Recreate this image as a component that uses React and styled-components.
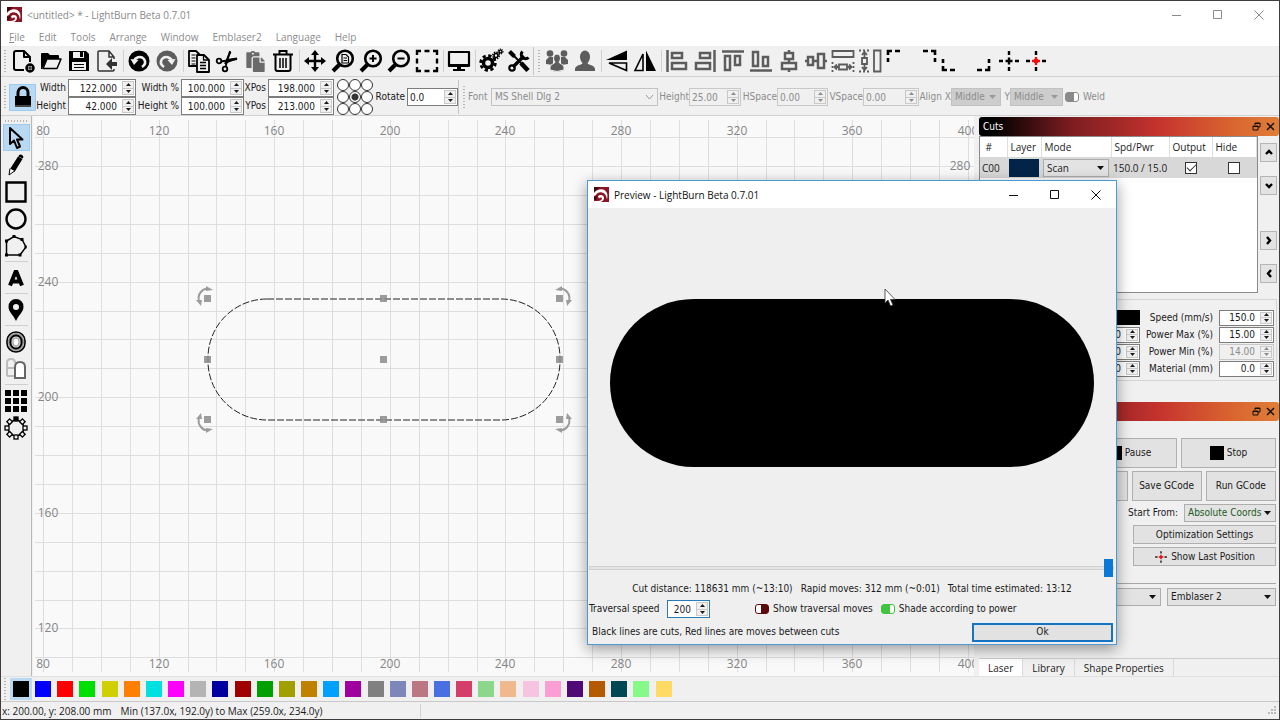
import React from "react";
import styled, { createGlobalStyle, css } from "styled-components";
import { FaPaste } from "react-icons/fa";

const tahoma = `"DejaVu Sans Condensed", "DejaVu Sans", sans-serif`;
const segoe = `"Open Sans", "Noto Sans", sans-serif`;

const GlobalStyle = createGlobalStyle`
  * { box-sizing: border-box; }
  body { margin: 0; background: #f0f0f0; overflow: hidden; }
  button, input, select { font: inherit; color: inherit; margin: 0; padding: 0; border: 0; background: none; border-radius: 0; outline: 0; }
`;

const Window = styled.div`
  display: flex;
  flex-direction: column;
  height: 100vh;
  border: 1px solid #403c3e;
  background: #f0f0f0;
  color: #1a1a1a;
  font: 10px/14px ${tahoma};
  position: relative;
  overflow: hidden;
`;

const TitleBar = styled.header`
  display: flex;
  align-items: center;
  flex: none;
  height: 27px;
  padding-left: 6px;
  background: #fff;
  font-family: ${segoe};
  color: ${(p) => (p.$active ? "#111" : "#8a8a8a")};
`;

const Title = styled.h1`
  flex: 1;
  margin: 0 0 0 5px;
  font-size: 10px;
  font-weight: 400;
`;

const WinButton = styled.button`
  width: 41px;
  height: 26px;
  display: flex;
  align-items: center;
  justify-content: center;
`;

const MenuBar = styled.nav`
  display: flex;
  flex: none;
  height: 18px;
  padding-left: 1px;
  background: #fff;
  font-family: ${segoe};
  color: #8c8c8c;
`;

const MenuItem = styled.button`
  padding: 0 7px;
`;

const ToolBar = styled.div`
  display: flex;
  align-items: center;
  flex: none;
  height: ${(p) => p.$h}px;
  padding-top: ${(p) => p.$pt || 0}px;
  border-bottom: 1px solid #d2d2d2;
`;

const Grip = styled.span`
  align-self: center;
  flex: none;
  width: 2px;
  height: 22px;
  margin: 0 3px;
  background: repeating-linear-gradient(#b4b4b4 0 1px, transparent 1px 3px);
`;

const RailGrip = styled.span`
  flex: none;
  width: 23px;
  height: 2px;
  margin: 4px 0 2px;
  background: repeating-linear-gradient(90deg, #b4b4b4 0 1px, transparent 1px 3px);
`;

const Split = styled.span`
  flex: none;
  width: 1px;
  height: 22px;
  margin: 0 1px 0 2px;
  background: #d0d0d0;
`;

const Edge = styled.span`
  flex: none;
  align-self: stretch;
  width: 1px;
  margin: 1px 1px 1px 0;
  background: #c4c4c4;
`;

const IconButton = styled.button`
  flex: none;
  display: flex;
  align-items: center;
  justify-content: center;
  width: ${(p) => p.$w || 28}px;
  height: 27px;
`;

const Glyph = styled.svg`
  display: block;
  flex: none;
  width: 24px;
  height: 24px;
  overflow: visible;
  color: ${(p) => p.$tone || "#000"};
`;

const LockButton = styled.button`
  flex: none;
  width: 27px;
  height: 27px;
  background: #b9d9f3;
  border: 1px solid #9ccbf0;
  display: flex;
  align-items: center;
  justify-content: center;
`;

const FieldGrid = styled.div`
  display: grid;
  flex: none;
  grid-template-columns: ${(p) => p.$label}px ${(p) => p.$field}px;
  column-gap: 2px;
  align-items: center;
`;

const Label = styled.label`
  text-align: ${(p) => (p.$left ? "left" : "right")};
  white-space: nowrap;
  flex: none;
  width: ${(p) => (p.$w ? p.$w + "px" : "auto")};
  color: ${(p) => (p.$off ? "#8c8c8c" : "inherit")};
`;

const SpinFrame = styled.span`
  display: flex;
  align-items: center;
  flex: none;
  width: ${(p) => (p.$w ? p.$w + "px" : "100%")};
  height: ${(p) => p.$h || 18}px;
  padding: 1px;
  border: 1px solid ${(p) => (p.$focus ? "#2a7ab8" : p.$off ? "#c8c8c8" : "#7c7c7c")};
  background: ${(p) => (p.$off ? "#f0f0f0" : "#fff")};
  color: ${(p) => (p.$off ? "#8c8c8c" : "#1a1a1a")};

  input {
    flex: 1;
    min-width: 0;
    height: 100%;
    padding: 0 5px 0 1px;
    text-align: ${(p) => (p.$left ? "left" : "right")};
  }
`;

const Steps = styled.span`
  display: flex;
  flex-direction: column;
  width: 12px;
  height: 100%;

  button {
    flex: 1;
    display: flex;
    align-items: center;
    justify-content: center;
    background: #f0f0f0;
    border: 1px solid #c9c9c9;
  }
  button + button { border-top: 0; }
  svg { display: block; width: 5px; height: 3px; }
`;

const SelectFrame = styled.span`
  position: relative;
  display: flex;
  flex: ${(p) => (p.$w ? "none" : "1")};
  width: ${(p) => (p.$w ? p.$w + "px" : "auto")};
  height: 18px;
  border: 1px solid ${(p) => (p.$off ? "#c2c2c2" : "#adadad")};
  background: ${(p) => p.$bg || "#e3e3e3"};
  color: ${(p) => p.$tone || "inherit"};

  select {
    appearance: none;
    flex: 1;
    min-width: 0;
    padding-left: 3px;
    opacity: 1;
  }
  svg {
    position: absolute;
    right: 4px;
    top: 6px;
    width: 7px;
    height: 4px;
    pointer-events: none;
    overflow: visible;
  }
`;

const Anchors = styled.fieldset`
  display: grid;
  grid-template-columns: repeat(3, 12px);
  flex: none;
  margin: 0 1px 0 3px;
  padding: 0;
  border: 0;

  input {
    appearance: none;
    width: 12px;
    height: 12px;
    border: 1px solid #333;
    border-radius: 50%;
    background: #fff;
  }
  input:checked {
    background: radial-gradient(circle, #333 0 3px, #fff 4px);
  }
`;

const Toggle = styled.input.attrs({ type: "checkbox" })`
  appearance: none;
  flex: none;
  width: 14px;
  height: 10px;
  border: 1px solid ${(p) => p.$c};
  border-radius: 3px;
  background: linear-gradient(90deg, ${(p) => (p.$right ? `#fff 0 5px, ${p.$c} 5px` : `${p.$c} 0 8px, #fff 8px`)});
`;

const WeldOption = styled.div`
  display: flex;
  align-items: center;
  gap: 4px;
  margin-left: 2px;
`;

const Body = styled.main`
  display: flex;
  flex: 1;
  min-height: 0;
`;

const Rail = styled.div`
  display: flex;
  flex-direction: column;
  align-items: center;
  flex: none;
  width: 31px;
  border-right: 1px solid #b8b8b8;
`;

const RailButton = styled.button`
  flex: none;
  display: flex;
  align-items: center;
  justify-content: center;
  width: 27px;
  height: 27px;
  ${(p) =>
    p.$on &&
    css`
      background: #b9d9f3;
      border: 1px solid #9ccbf0;
    `}
`;

const RailSplit = styled.span`
  flex: none;
  width: 23px;
  height: 1px;
  margin: 2px 0;
  background: #cfcfcf;
`;

const Canvas = styled.svg`
  flex: 1;
  min-width: 0;
  height: 100%;
  margin-left: 1px;
  background: #f9f9f9;
  font: 12px ${segoe};
`;

const Dock = styled.aside`
  display: flex;
  flex-direction: column;
  flex: none;
  width: 300px;
  margin-left: 5px;
  padding-top: 1px;
`;

const DockHeader = styled.h2`
  display: flex;
  align-items: center;
  flex: none;
  height: 19px;
  margin: ${(p) => (p.$spaced ? "21px 0 0" : "0")};
  padding: 0 3px 0 4px;
  gap: 3px;
  border-radius: 3px;
  background: linear-gradient(90deg, #000 5%, #7a1c20 30%, #c5332e 60%, #d8602e 82%, #e07e38);
  color: #fff;
  font-size: 10px;
  font-weight: 400;

  span { flex: 1; }
  button { width: 11px; height: 12px; }
`;

const CutsArea = styled.div`
  display: flex;
  flex: none;
  height: 157px;
`;

const CutsList = styled.div`
  flex: 1;
  background: #fff;
  border: 1px solid #8a8a8a;
`;

const CutsTable = styled.table`
  width: 100%;
  table-layout: fixed;
  border-collapse: collapse;
  font: 10px/14px ${segoe};

  th {
    height: 20px;
    padding: 0 3px;
    font-weight: 400;
    text-align: left;
    border-right: 1px solid #dedede;
    white-space: nowrap;
  }
  td {
    height: 21px;
    padding: 0 2px;
    background: #d8d8d8;
    white-space: nowrap;
  }
`;

const LayerChip = styled.span`
  display: block;
  height: 18px;
  background: #022446;
`;

const Tick = styled.input.attrs({ type: "checkbox" })`
  appearance: none;
  display: block;
  width: 12px;
  height: 12px;
  margin: 0 auto !important;
  background: #fff !important;
  border: 1px solid #333 !important;

  &:checked::after {
    content: "";
    display: block;
    width: 8px;
    height: 4px;
    margin: 1px;
    border: solid #333;
    border-width: 0 0 1px 1px;
    transform: rotate(-45deg);
  }
`;

const OrderColumn = styled.div`
  display: flex;
  flex-direction: column;
  justify-content: space-between;
  width: 21px;
  padding: 7px 2px 10px 2px;
  gap: 14px;

  button {
    width: 17px;
    height: 19px;
    display: flex;
    align-items: center;
    justify-content: center;
    background: #e3e3e3;
    border: 1px solid #b5b5b5;
  }
  button:nth-child(3) { margin-top: 22px; }
`;

const LayerForm = styled.div`
  display: grid;
  flex: none;
  grid-template-columns: 95px 60px 1fr 55px;
  grid-auto-rows: 17px;
  column-gap: 6px;
  align-items: center;
  margin-top: 6px;
  padding: 9px 6px 3px 0;
  margin-right: 2px;
  border: solid #d4d4d4;
  border-width: 1px 1px 1px 0;
`;

const BlackBar = styled.span`
  height: 15px;
  background: #000;
`;

const LaserPanel = styled.div`
  display: flex;
  flex-direction: column;
  flex: 1;
  padding: 17px 3px 0 4px;
`;

const Row = styled.div`
  display: flex;
  align-items: center;
  flex: none;
  gap: ${(p) => p.$gap || 4}px;
  margin-bottom: 3px;
  justify-content: ${(p) => (p.$end ? "flex-end" : "flex-start")};
`;

const PushButton = styled.button`
  display: flex;
  align-items: center;
  justify-content: center;
  gap: 3px;
  flex: ${(p) => (p.$w ? "none" : "1")};
  width: ${(p) => (p.$w ? p.$w + "px" : "auto")};
  min-width: 0;
  height: ${(p) => p.$h || 30}px;
  background: #e2e2e2;
  border: 1px solid #b0b0b0;
  white-space: nowrap;
  ${(p) =>
    p.$primary &&
    css`
      border: 2px solid #1673c4;
    `}
`;

const Square = styled.span`
  width: 14px;
  height: 14px;
  background: #000;
`;

const Rule = styled.hr`
  width: 100%;
  margin: 14px 0 4px;
  border: 0;
  border-top: 1px solid #a8a8a8;
`;

const Tabs = styled.div`
  display: flex;
  flex: none;
  height: 18px;
  border-top: 1px solid #cccccc;
  font-family: ${segoe};
`;

const Tab = styled.button`
  padding: 0 9px;
  border-right: 1px solid #dadada;
  background: ${(p) => (p.$on ? "#fff" : "transparent")};
`;

const Palette = styled.div`
  display: flex;
  align-items: center;
  flex: none;
  height: 26px;
  border-top: 1px solid #e0e0e0;
  border-bottom: 1px solid #c8c8c8;
`;

const Swatches = styled.div`
  display: flex;
  justify-content: space-between;
  width: 52%;
  margin-left: 1px;
`;

const Swatch = styled.button`
  width: 22px;
  height: 22px;
  padding: 3px;
  background: ${(p) => (p.$on ? "#b9d9f3" : "transparent")};

  span {
    display: block;
    width: 16px;
    height: 16px;
    background: ${(p) => p.$c};
  }
`;

const StatusBar = styled.footer`
  display: flex;
  align-items: center;
  flex: none;
  height: 17px;
  padding: 0 2px 0 1px;
  gap: 9px;
  font-family: ${segoe};

  span:nth-child(2) { flex: 0 0 301px; border-right: 1px solid #d4d4d4; }
  svg { margin-left: auto; }
`;

const Dialog = styled.section`
  position: absolute;
  left: 586px;
  top: 179px;
  width: 530px;
  height: 465px;
  display: flex;
  flex-direction: column;
  background: #efefef;
  border: 1px solid #4d9bd2;
  box-shadow: 0 4px 14px rgba(0, 0, 0, 0.4);
`;

const PreviewArea = styled.div`
  flex: 1;
  display: flex;
  align-items: center;
  justify-content: center;
`;

const Slider = styled.input.attrs({ type: "range" })`
  appearance: none;
  flex: none;
  height: 20px;
  margin: 0 2px 0 1px !important;

  &::-webkit-slider-runnable-track {
    height: 4px;
    background: #e4e4e4;
    border: 1px solid #d2d2d2;
  }
  &::-webkit-slider-thumb {
    appearance: none;
    width: 9px;
    height: 18px;
    margin-top: -8px;
    background: #0a78d6;
  }
`;

const Stats = styled.p`
  flex: none;
  display: flex;
  justify-content: center;
  gap: 8px;
  height: 20px;
  margin: 0;
  line-height: 22px;
  white-space: pre;
`;

const DialogRow = styled.div`
  display: flex;
  align-items: center;
  flex: none;
  gap: 5px;
  height: ${(p) => p.$h}px;
  padding: 0 3px 0 ${(p) => p.$pl}px;
`;

const TraversalOptions = styled.div`
  display: flex;
  align-items: center;
  gap: 4px;
  margin-left: 40px;

  label { margin-right: 4px; }
`;

const Note = styled.span`
  flex: 1;
`;

const Pointer = styled.svg`
  position: absolute;
  left: 296px;
  top: 107px;
  width: 12px;
  height: 19px;
`;

function Logo() {
  return (
    <svg width="15" height="15" viewBox="0 0 15 15" aria-hidden="true">
      <rect width="15" height="15" fill="#8d1425" />
      <path d="M0 0h6L0 5z" fill="#3c0a12" />
      <path d="M0 6C3 2 8 1.500 11 3.500c2.500 2 3 5 2 9-.5-4-2-6.500-5-7C5 5 3 6 2 8L0 9z" fill="#fff" />
      <path d="M4 9.500C6 7 10 8 10 11c0 2-2 4-4 4H0v-1h4c2 0 4-1 4-2.500C8 10 6 10 5 11.500z" fill="#fff" />
      <path d="M0 10l3-1-1 4H0z" fill="#3c0a12" />
    </svg>
  );
}

function WindowButtons() {
  return (
    <>
      <WinButton aria-label="Minimize">
        <svg width="10" height="10"><path d="M0 5.500h9" stroke="currentColor" /></svg>
      </WinButton>
      <WinButton aria-label="Maximize">
        <svg width="10" height="10"><path d="M.5.500h8v8h-8z" fill="none" stroke="currentColor" /></svg>
      </WinButton>
      <WinButton aria-label="Close">
        <svg width="10" height="10"><path d="M.5.500l9 9m0-9l-9 9" stroke="currentColor" /></svg>
      </WinButton>
    </>
  );
}

function Spin({ id, value, label, disabled, ...rest }) {
  return (
    <SpinFrame $off={disabled} {...rest}>
      <input id={id} aria-label={label} defaultValue={value} disabled={disabled} />
      <Steps>
        <button aria-label="Increase" tabIndex={-1}>
          <svg viewBox="0 0 5 3"><path d="M0 3h5L2.500 0z" fill="currentColor" /></svg>
        </button>
        <button aria-label="Decrease" tabIndex={-1}>
          <svg viewBox="0 0 5 3"><path d="M0 0h5L2.500 3z" fill="currentColor" /></svg>
        </button>
      </Steps>
    </SpinFrame>
  );
}

function Combo({ id, label, options, arrow = "#111", chevron, ...rest }) {
  return (
    <SelectFrame {...rest}>
      <select id={id} aria-label={label}>
        {options.map((o) => <option key={o}>{o}</option>)}
      </select>
      <svg viewBox="0 0 7 4">
        <path d={chevron ? "M0 0l3.500 4L7 0" : "M0 0h7L3.500 4z"} fill={chevron ? "none" : arrow} stroke={chevron ? arrow : "none"} />
      </svg>
    </SelectFrame>
  );
}

const line = { fill: "none", stroke: "currentColor", strokeWidth: 2 };

// 24x24 drawings for the tool bars
const icons = {
  new: (
    <g {...line} strokeLinejoin="round">
      <path d="M13 21H5a2 2 0 0 1-2-2V4a2 2 0 0 1 2-2h8l6 6v5" />
      <path d="M13 2v6h6" />
      <circle cx="19" cy="19" r="3.500" strokeWidth="2.500" />
      <path d="M19 16v6m-3-3h6" strokeWidth="1" />
    </g>
  ),
  open: (
    <g>
      <path d="M2 20V5q0-1 1-1h6l2 2h8q1 0 1 1v3H8L3 20z" fill="currentColor" />
      <path d="M8 10h14l-4 9.500H4z" fill="#f0f0f0" stroke="currentColor" strokeWidth="1.500" strokeLinejoin="round" />
    </g>
  ),
  save: (
    <g>
      <path d="M2 2h17l3 3v17H2z" fill="currentColor" />
      <path d="M6 3h11v6H6zM5 13h14v8H5z" fill="#f0f0f0" />
      <path d="M13 3h3v5h-3zM7 15h10v1H7zM7 18h10v1H7z" fill="currentColor" />
    </g>
  ),
  import: (
    <g>
      <path {...line} strokeWidth="1.500" d="M19 10V8l-5-6H4a1 1 0 0 0-1 1v18a1 1 0 0 0 1 1h14a1 1 0 0 0 1-1v-1M14 2v6h5" />
      <path d="M11 15l6-6v4h5v4h-5v4z" fill="currentColor" />
    </g>
  ),
  undo: (
    <g>
      <circle cx="12" cy="12" r="10.500" fill="currentColor" />
      <path d="M7 12.500C8 8 14 6.500 17 10c2 3 1 6-2 8" fill="none" stroke="#f0f0f0" strokeWidth="2.500" />
      <path d="M3.500 10l8 1-4.500 5z" fill="#f0f0f0" />
    </g>
  ),
  copy: (
    <g {...line} strokeWidth="1.800" strokeLinejoin="round">
      <path d="M10 17H2V2h7l4 4" />
      <path d="M4.500 6h4m-4 3h4m-4 3h4m-4 3h4" strokeWidth="1.200" />
      <path d="M10 6h7l5 5v12H10z" fill="#f0f0f0" />
      <path d="M16.500 6v5H22M13 13.500h6m-6 3h6m-6 3h6" strokeWidth="1.300" />
    </g>
  ),
  cut: (
    <g {...line} strokeWidth="1.800">
      <circle cx="4" cy="12" r="2.300" />
      <circle cx="10" cy="20" r="2.300" />
      <path d="M6 12.500L22 10M10.500 18L15 2" />
      <path d="M10 14l12-4.500-8 1zM10 15l5.500-12-2 4z" fill="currentColor" />
    </g>
  ),
  trash: (
    <g {...line}>
      <path d="M2 5.500h20M8.500 5V2h7v3M4.500 6v14q0 2 2 2h11q2 0 2-2V6" />
      <path d="M9 9v10m3-10v10m3-10v10" strokeWidth="1.500" />
    </g>
  ),
  move: (
    <g>
      <path {...line} strokeWidth="2.400" d="M12 4v16M4 12h16" />
      <path fill="currentColor" d="M12 1l4 5H8zM12 23l4-5H8zM1 12l5-4v8zM23 12l-5-4v8z" />
    </g>
  ),
  zoomPage: (
    <g {...line}>
      <circle cx="14" cy="9.500" r="7.800" strokeWidth="2.600" />
      <path d="M8.500 15.500L2 22" strokeWidth="4" />
      <path d="M11 5.500h4l2.500 2.500v6H11z" strokeWidth="1.200" />
      <path d="M12.500 9h3.500m-3.500 2.500h3.500" strokeWidth="1" />
    </g>
  ),
  zoomIn: (
    <g {...line}>
      <circle cx="14" cy="9.500" r="7.800" strokeWidth="2.600" />
      <path d="M8.500 15.500L2 22" strokeWidth="4" />
      <path d="M14 6v7m-3.500-3.500h7" />
    </g>
  ),
  zoomOut: (
    <g {...line}>
      <circle cx="14" cy="9.500" r="7.800" strokeWidth="2.600" />
      <path d="M8.500 15.500L2 22" strokeWidth="4" />
      <path d="M10.500 9.500h7" />
    </g>
  ),
  frame: <path {...line} strokeWidth="2.400" d="M2 6V2h4M9.500 2h5M18 2h4v4M22 9.500v5M22 18v4h-4M14.500 22h-5M6 22H2v-4M2 14.500v-5" />,
  monitor: (
    <g>
      <path {...line} strokeWidth="2.200" strokeLinejoin="round" d="M2 3h20v14H2z" />
      <path d="M2 15h20v2.500H2zM10 17h4v3h4v2H6v-2h4z" fill="currentColor" />
    </g>
  ),
  gears: (
    <g {...line}>
      <circle cx="9" cy="14" r="4.500" strokeWidth="3.500" />
      <circle cx="9" cy="14" r="7.400" strokeWidth="2.600" strokeDasharray="3.300 2.510" />
      <circle cx="17" cy="6.500" r="2" strokeWidth="1.600" />
      <circle cx="17" cy="6.500" r="3.300" strokeWidth="1.400" strokeDasharray="1.500 1.090" />
      <circle cx="21.500" cy="2.500" r="1.400" strokeWidth="1.300" />
      <circle cx="21.500" cy="2.500" r="2.400" strokeWidth="1.200" strokeDasharray="1.100 .785" />
    </g>
  ),
  tools: (
    <g {...line}>
      <path d="M2.500 2.500l5 5" strokeWidth="4" />
      <path d="M6 6l9 9" />
      <path d="M14 14l7 7.500" strokeWidth="4.600" />
      <path d="M17 7L6 18" strokeWidth="3.400" />
      <path d="M15.500 2.500a4.200 4.200 0 1 0 6 6" strokeWidth="3" />
      <circle cx="5" cy="19" r="2.700" strokeWidth="2.200" />
    </g>
  ),
  people: (
    <g fill="currentColor">
      <circle cx="5" cy="4.500" r="3.300" />
      <circle cx="19" cy="4.500" r="3.300" />
      <path d="M1 15v-4l3-3h4v8zM23 15v-4l-3-3h-4v8z" />
      <path d="M8.500 9a3.500 4 0 0 1 7 0c0 2-1 3-1.500 4 0 2 5 2 5 5v3q-7 3-14 0v-3c0-3 5-3 5-5-.5-1-1.500-2-1.500-4z" stroke="#f0f0f0" />
    </g>
  ),
  person: <path fill="currentColor" d="M7 7.500a5 6 0 0 1 10 0c0 3-1 5-2.500 6.500 0 2 7.500 2 7.500 6v2H2v-2c0-4 7.500-4 7.500-6C8 12.500 7 10.500 7 7.500z" />,
  flipV: (
    <g>
      <path d="M1 11L22 1.500V11z" fill="currentColor" />
      <path {...line} strokeWidth="1.600" d="M4 14h17.500v7.500z" />
    </g>
  ),
  flipH: (
    <g>
      <path d="M13 1.500L23 22H13z" fill="currentColor" />
      <path {...line} strokeWidth="1.600" d="M10 5v16.500H2z" />
    </g>
  ),
  alignLeft: <path {...line} strokeWidth="2.500" d="M2.500 1v22M7 4h10v5H7zM7 14h14v6H7z" />,
  alignRight: <path {...line} strokeWidth="2.500" d="M21.500 1v22M7 4h10v5H7zM3 14h14v6H3z" />,
  alignTop: <path {...line} strokeWidth="2.500" d="M1 2.500h22M4 7h5v14H4zM14 7h5v9h-5z" />,
  alignBottom: <path {...line} strokeWidth="2.500" d="M1 21.500h22M4 3h5v14H4zM14 8h5v9h-5z" />,
  centerV: <path {...line} strokeWidth="2.500" d="M12 1v3M12 10v3M12 20v3M8 4h8v6H8zM5 14h14v6H5z" />,
  centerH: <path {...line} strokeWidth="2.500" d="M1 12h2M9 12h4M20 12h3M4 8h5v8H4zM14 5h6v14h-6z" />,
  spreadH: (
    <g {...line} strokeWidth="1.800">
      <path d="M1.500 2h21v6h-21z" />
      <path d="M1.500 13v10M22.500 13v10" strokeDasharray="2 2" />
      <path d="M8 15.500h8v5H8zM3 18h5m8 0h5M6 15.500L3.500 18 6 20.500m12-5l2.500 2.500-2.500 2.500" />
    </g>
  ),
  spreadV: (
    <g {...line} strokeWidth="1.800">
      <path d="M16 1.500h6.500v21H16z" />
      <path d="M1 1.500h11M1 22.500h11" strokeDasharray="2 2" />
      <path d="M4 9h5v6H4zM6.500 3v6m0 6v6M4 6l2.500-3L9 6M4 18l2.500 3L9 18" />
    </g>
  ),
  cornerTL: <path {...line} strokeWidth="2.600" d="M3 6V2h4M10 2h5M3 9v4" />,
  cornerTR: <path {...line} strokeWidth="2.600" d="M22 6V2h-4M15 2h-5M22 9v4" />,
  cornerBL: <path {...line} strokeWidth="2.600" d="M2 17v4h4M9 21h5M2 14v-4" />,
  cornerBR: <path {...line} strokeWidth="2.600" d="M20 17v4h-4M13 21H8M20 14v-4" />,
  cross: <path {...line} strokeWidth="2.400" d="M12 2v4M12 8.500v7M12 18v4M2 12h4M8.500 12h7M18 12h4" />,
  crossRed: (
    <g {...line} strokeWidth="2.400">
      <path d="M12 2v4M12 18v4M2 12h4M18 12h4" />
      <path d="M12 8v8M8 12h8" stroke="#f01010" />
      <path d="M12 10v4M10 12h4" stroke="#f01010" strokeWidth="4" />
    </g>
  ),
  lock: (
    <g>
      <path {...line} strokeWidth="3" d="M7 12V7.500a5 5 0 0 1 10 0V12" />
      <path d="M4 11h16v9H4z" fill="currentColor" />
      <path d="M4 20h16v2H4z" fill="#444" />
    </g>
  ),
  select: <path {...line} strokeLinejoin="round" d="M6 2v16l4-3.500 3 7.500 3-1.500-3-7h5.500z" />,
  pencil: (
    <g>
      <path d="M14 3.500l4.500 2.500L10.500 19 6 16zM15 2q3-1.500 4.500 2L18.500 5.500l-4-2z" fill="currentColor" />
      <path d="M6 15.500L5 22l5.500-4" fill="#fff" stroke="currentColor" strokeWidth="1" />
    </g>
  ),
  rect: <path {...line} strokeWidth="2.400" d="M2.500 2.500h19v19h-19z" />,
  circle: <circle {...line} strokeWidth="2.400" cx="12" cy="12" r="9.500" />,
  polygon: (
    <g {...line} strokeWidth="1.500">
      <path d="M2.500 7L10 2.500l8 3L22 13l-6 8H2.500z" />
      <path d="M1 5.500h3v3H1zM8.500 1h3v3h-3zM16.500 4h3v3h-3zM20.500 11.500h2v3h-2zM14.500 19.500h3v3h-3zM1 19.500h3v3H1z" fill="currentColor" stroke="none" />
    </g>
  ),
  text: <path {...line} strokeWidth="4" d="M6 19.500L11.500 6h1L18 19.500M8 15.500h8" />,
  pin: (
    <path fillRule="evenodd" fill="currentColor" d="M12 1a7.500 7.500 0 0 1 7.500 8c0 5-5 8-7.500 14C9.500 17 4.500 14 4.500 9A7.500 7.500 0 0 1 12 1zm0 5a3 3 0 1 0 0 6 3 3 0 0 0 0-6z" />
  ),
  offset: (
    <g {...line}>
      <rect x="3" y="2" width="18" height="20" rx="9" strokeWidth="1.600" />
      <rect x="5" y="4" width="14" height="16" rx="7" stroke="#999" />
      <rect x="6.500" y="5.500" width="11" height="13" rx="5.500" strokeWidth="2" />
      <rect x="9" y="8" width="6" height="8" rx="3" stroke="#aaa" fill="#fff" strokeWidth="1.500" />
    </g>
  ),
  weld: (
    <g {...line}>
      <path d="M3 19V6q0-4 4-4 4 0 4 4M3 11h7M3 19h7" stroke="#bcbcbc" />
      <path d="M11 21V10q0-5 5-5t5 5v11z" stroke="#666" fill="#fff" />
    </g>
  ),
  grid: (
    <g fill="currentColor">
      {[1, 9, 17].map((y) => [1, 9, 17].map((x) => <rect key={x + "-" + y} x={x} y={y} width="6" height="6" />))}
    </g>
  ),
  ring: (
    <g fill="#f0f0f0" stroke="currentColor" strokeWidth="1.300">
      <circle cx="12" cy="12" r="8" fill="none" />
      {[0, 1, 2, 3, 4, 5, 6, 7].map((i) => (
        <rect key={i} x="10" y="1" width="4" height="4" fill={i ? "#f0f0f0" : "currentColor"} transform={`rotate(${i * 45} 12 12)`} />
      ))}
    </g>
  ),
};

function Icon({ name, tone }) {
  return <Glyph viewBox="0 0 24 24" $tone={tone} aria-hidden="true">{icons[name]}</Glyph>;
}

function Tool({ name, label, tone, w, flip }) {
  return (
    <IconButton aria-label={label} $w={w}>
      {flip ? (
        <Glyph viewBox="0 0 24 24" $tone={tone}><g transform="matrix(-1 0 0 1 24 0)">{icons[name]}</g></Glyph>
      ) : (
        <Icon name={name} tone={tone} />
      )}
    </IconButton>
  );
}

const menus = ["Edit", "Tools", "Arrange", "Window", "Emblaser2", "Language", "Help"];
const grey = "#5c5c5c";

const colors = [
  "#000000", "#0000ff", "#ff0000", "#00e000", "#d0d000", "#ff8000", "#00e0e0", "#ff00ff", "#b4b4b4", "#0000a0",
  "#a00000", "#00a000", "#a0a000", "#c08000", "#00a0ff", "#a000a0", "#808080", "#7d87b9", "#bb7784", "#4a6fe3",
  "#d33f6a", "#8cd78c", "#f0b98d", "#f6c4e1", "#fa9ed4", "#500a78", "#b45a00", "#004754", "#86fa88", "#ffdb66",
];

// work area: millimetres to canvas pixels
const toX = (mm) => Math.round((mm - 80) * 2.89) + 10;
const toY = (mm) => Math.round((280 - mm) * 2.89) + 50;
const range = (from, to, step) => Array.from({ length: (to - from) / step + 1 }, (_, i) => from + i * step);

function WorkArea() {
  const [left, right, top, bottom] = [toX(137), toX(259), toY(234), toY(192)];
  const handles = [[left, top], [198, top], [right, top], [left, 213], [198, 213], [right, 213], [left, bottom], [198, bottom], [right, bottom]];
  return (
    <Canvas aria-label="Work area">
      <g stroke="#dedede" shapeRendering="crispEdges">
        {range(80, 400, 10).map((v) => <line key={"x" + v} x1={toX(v)} x2={toX(v)} y1="4" y2="556" />)}
        {range(110, 290, 10).map((v) => <line key={"y" + v} x1="2" x2="100%" y1={toY(v)} y2={toY(v)} />)}
      </g>
      <g fill="#858585" textAnchor="middle">
        {range(80, 400, 40).map((v) => (
          <React.Fragment key={v}>
            <text x={toX(v)} y="19">{v}</text>
            <text x={toX(v)} y="552">{v}</text>
          </React.Fragment>
        ))}
        {range(120, 280, 40).map((v) => <text key={v} x="15" y={toY(v) + 4}>{v}</text>)}
        <text x={toX(400) - 8} y={toY(280) + 4}>280</text>
      </g>
      <rect x={left} y={top} width={right - left} height={bottom - top} rx="59" fill="none" stroke="#222" strokeDasharray="7 2" />
      <g fill="#8c8c8c" fillOpacity=".85">
        {handles.map(([x, y], i) => (
          <rect key={i} x={(x === 198 ? toX(198) : x) - 4} y={(y === 213 ? toY(213) : y) - 4} width="7" height="7" />
        ))}
      </g>
      {[[left, top, 1, 1], [right, top, -1, 1], [left, bottom, 1, -1], [right, bottom, -1, -1]].map(([x, y, sx, sy]) => (
        <g key={x + "-" + y} transform={`translate(${x} ${y}) scale(${sx} ${sy})`} fill="#9c9c9c">
          <path d="M-9 2C-11-5-5-11 0-10" fill="none" stroke="#9c9c9c" strokeWidth="2" />
          <path d="M-2-13L5-9-2-8zM-12 1h6l-1 6z" />
        </g>
      ))}
    </Canvas>
  );
}

function MainTools() {
  return (
    <ToolBar $h={31}>
      <Grip />
      <Tool name="new" label="New" />
      <Tool name="open" label="Open" />
      <Tool name="save" label="Save" />
      <Tool name="import" label="Import" tone="#333" />
      <Split />
      <Tool name="undo" label="Undo" />
      <Tool name="undo" label="Redo" tone={grey} flip />
      <Split />
      <Tool name="copy" label="Copy" />
      <Tool name="cut" label="Cut" />
      <IconButton aria-label="Paste"><FaPaste size={21} color="#6a6a6a" /></IconButton>
      <Tool name="trash" label="Delete" />
      <Split />
      <Tool name="move" label="Pan" />
      <Tool name="zoomPage" label="Zoom to page" />
      <Tool name="zoomIn" label="Zoom in" />
      <Tool name="zoomOut" label="Zoom out" />
      <Tool name="frame" label="Frame selection" />
      <Split />
      <Tool name="monitor" label="Preview" />
      <Split />
      <Tool name="gears" label="Settings" />
      <Tool name="tools" label="Device settings" />
      <Edge />
      <Grip />
      <Tool name="people" label="Group" tone={grey} />
      <Tool name="person" label="Ungroup" tone={grey} />
      <Split />
      <Tool name="flipV" label="Flip vertical" />
      <Tool name="flipH" label="Flip horizontal" />
      <Split />
      {["alignLeft", "alignRight", "alignTop", "alignBottom"].map((n) => (
        <Tool key={n} name={n} label={n} tone={grey} />
      ))}
      {["centerV", "centerH", "spreadH", "spreadV"].map((n) => (
        <Tool key={n} name={n} label={n} tone={grey} w={27} />
      ))}
      {["cornerTL", "cornerTR", "cornerBL", "cornerBR"].map((n) => (
        <Tool key={n} name={n} label={n} />
      ))}
      {["cross", "crossRed"].map((n) => (
        <Tool key={n} name={n} label={n} w={27} />
      ))}
    </ToolBar>
  );
}

function NumericTools() {
  return (
    <ToolBar $h={39} $pt={2}>
      <Grip />
      <LockButton aria-label="Lock aspect ratio"><Icon name="lock" /></LockButton>
      <FieldGrid $label={30} $field={68}>
        <Label htmlFor="width">Width</Label>
        <Spin id="width" value="122.000" />
        <Label htmlFor="height">Height</Label>
        <Spin id="height" value="42.000" />
      </FieldGrid>
      <FieldGrid $label={43} $field={63}>
        <Label htmlFor="widthPct">Width %</Label>
        <Spin id="widthPct" value="100.000" />
        <Label htmlFor="heightPct">Height %</Label>
        <Spin id="heightPct" value="100.000" />
      </FieldGrid>
      <FieldGrid $label={22} $field={66}>
        <Label htmlFor="xpos">XPos</Label>
        <Spin id="xpos" value="198.000" />
        <Label htmlFor="ypos">YPos</Label>
        <Spin id="ypos" value="213.000" />
      </FieldGrid>
      <Anchors aria-label="Anchor">
        {range(0, 8, 1).map((i) => <input key={i} type="radio" name="anchor" aria-label={"Anchor " + i} defaultChecked={i === 4} />)}
      </Anchors>
      <FieldGrid $label={31} $field={51}>
        <Label htmlFor="rotate">Rotate</Label>
        <Spin id="rotate" value="0.0" $left />
      </FieldGrid>
      <Edge />
      <Grip />
      <Label htmlFor="font" $w={23} $off $left>Font</Label>
      <Combo id="font" options={["MS Shell Dlg 2"]} $w={167} $off $bg="#f0f0f0" $tone="#8c8c8c" arrow="#999" chevron />
      <Label htmlFor="fontHeight" $w={31} $off>Height</Label>
      <Spin id="fontHeight" value="25.00" disabled $w={52} $left />
      <Label htmlFor="hspace" $w={36} $off>HSpace</Label>
      <Spin id="hspace" value="0.00" disabled $w={51} $left />
      <Label htmlFor="vspace" $w={35} $off>VSpace</Label>
      <Spin id="vspace" value="0.00" disabled $w={56} $left />
      <Label htmlFor="alignX" $w={32} $off>Align X</Label>
      <Combo id="alignX" options={["Middle"]} $w={50} $off $bg="#cdcdcd" $tone="#8c8c8c" arrow="#9a9a9a" />
      <Label htmlFor="alignY" $w={9} $off>Y</Label>
      <Combo id="alignY" options={["Middle"]} $w={53} $off $bg="#cdcdcd" $tone="#8c8c8c" arrow="#9a9a9a" />
      <WeldOption>
        <Toggle id="weld" $c="#8a8a8a" />
        <Label htmlFor="weld" $off>Weld</Label>
      </WeldOption>
    </ToolBar>
  );
}

function ToolRail() {
  return (
    <Rail>
      <RailGrip />
      <RailButton aria-label="Select" $on><Icon name="select" /></RailButton>
      <RailButton aria-label="Draw lines"><Icon name="pencil" /></RailButton>
      <RailButton aria-label="Rectangle"><Icon name="rect" /></RailButton>
      <RailButton aria-label="Ellipse"><Icon name="circle" /></RailButton>
      <RailButton aria-label="Polygon"><Icon name="polygon" /></RailButton>
      <RailSplit />
      <RailButton aria-label="Text"><Icon name="text" /></RailButton>
      <RailSplit />
      <RailButton aria-label="Position laser"><Icon name="pin" /></RailButton>
      <RailSplit />
      <RailButton aria-label="Offset"><Icon name="offset" /></RailButton>
      <RailButton aria-label="Weld shapes"><Icon name="weld" /></RailButton>
      <RailSplit />
      <RailButton aria-label="Grid array"><Icon name="grid" /></RailButton>
      <RailButton aria-label="Circular array"><Icon name="ring" /></RailButton>
    </Rail>
  );
}

function PanelHeader({ title, spaced }) {
  return (
    <DockHeader $spaced={spaced}>
      <span>{title}</span>
      <button aria-label="Float panel">
        <svg width="9" height="9"><path d="M3 3V1h5v4H6M1 4h5v4H1zM1 4.500h5M3 1.500h5" fill="none" stroke="#111" /></svg>
      </button>
      <button aria-label="Close panel">
        <svg width="9" height="9"><path d="M1 1l7 7m0-7L1 8" stroke="#111" strokeWidth="1.500" /></svg>
      </button>
    </DockHeader>
  );
}

const arrows = { "Move up": "M2 6l3-3 3 3", "Move down": "M2 3l3 3 3-3", "Move right": "M3 1l3 3.500L3 8", "Move left": "M7 1L4 4.500 7 8" };

function CutsPanel() {
  return (
    <>
      <PanelHeader title="Cuts" />
      <CutsArea>
        <CutsList>
          <CutsTable>
            <colgroup>
              <col width="27" /><col width="34" /><col width="70" /><col width="58" /><col width="43" /><col />
            </colgroup>
            <thead>
              <tr><th>&nbsp;#</th><th>Layer</th><th>Mode</th><th>Spd/Pwr</th><th>Output</th><th>Hide</th></tr>
            </thead>
            <tbody>
              <tr>
                <td>C00</td>
                <td><LayerChip /></td>
                <td><Combo label="Mode" options={["Scan"]} /></td>
                <td>150.0 / 15.0</td>
                <td><Tick aria-label="Output" defaultChecked /></td>
                <td><Tick aria-label="Hide" /></td>
              </tr>
            </tbody>
          </CutsTable>
        </CutsList>
        <OrderColumn>
          {Object.keys(arrows).map((a) => (
            <button key={a} aria-label={a}>
              <svg width="10" height="9"><path d={arrows[a]} fill="none" stroke="#000" strokeWidth="2.400" /></svg>
            </button>
          ))}
        </OrderColumn>
      </CutsArea>
      <LayerForm>
        <span /><BlackBar />
        <Label htmlFor="speed">Speed (mm/s)</Label><Spin id="speed" value="150.0" $h={16} />
        <span /><Spin label="Interval" value="0" $h={16} />
        <Label htmlFor="pmax">Power Max (%)</Label><Spin id="pmax" value="15.00" $h={16} />
        <span /><Spin label="Passes" value="0" $h={16} />
        <Label htmlFor="pmin">Power Min (%)</Label><Spin id="pmin" value="14.00" disabled $h={16} />
        <span /><Spin label="Offset" value="0" $h={16} />
        <Label htmlFor="mat">Material (mm)</Label><Spin id="mat" value="0.0" $h={16} />
      </LayerForm>
    </>
  );
}

function LaserControls() {
  return (
    <LaserPanel>
      <Row>
        <PushButton aria-label="Start" />
        <PushButton><Square />Pause</PushButton>
        <PushButton><Square />Stop</PushButton>
      </Row>
      <Row>
        <PushButton aria-label="Home" />
        <PushButton aria-label="Frame" />
        <PushButton>Save GCode</PushButton>
        <PushButton>Run GCode</PushButton>
      </Row>
      <Row $end $gap={6}>
        <Label htmlFor="startFrom">Start From:</Label>
        <Combo id="startFrom" options={["Absolute Coords"]} $w={92} $tone="#1d5a24" />
      </Row>
      <Row $end><PushButton $w={143} $h={19}>Optimization Settings</PushButton></Row>
      <Row $end>
        <PushButton $w={143} $h={19}>
          <svg width="14" height="14" viewBox="0 0 24 24">{icons.crossRed}</svg>
          Show Last Position
        </PushButton>
      </Row>
      <Rule />
      <Row $end $gap={6}>
        <Combo label="Port" options={[""]} />
        <Combo label="Device" options={["Emblaser 2"]} $w={109} />
      </Row>
    </LaserPanel>
  );
}

function Preview() {
  return (
    <Dialog role="dialog" aria-label="Preview">
      <TitleBar $active>
        <Logo />
        <Title>Preview - LightBurn Beta 0.7.01</Title>
        <WindowButtons />
      </TitleBar>
      <PreviewArea>
        <svg width="484" height="168"><rect width="484" height="168" rx="84" /></svg>
      </PreviewArea>
      <Slider aria-label="Progress" defaultValue={100} />
      <Stats>
        <span>Cut distance: 118631 mm (~13:10)</span>
        <span>Rapid moves: 312 mm (~0:01)</span>
        <span>Total time estimated: 13:12</span>
      </Stats>
      <DialogRow $h={22} $pl={1}>
        <Label htmlFor="traversal" $w={73} $left>Traversal speed</Label>
        <Spin id="traversal" value="200" $w={43} $focus />
        <TraversalOptions>
          <Toggle id="showMoves" $c="#5c0a0a" $right />
          <Label htmlFor="showMoves">Show traversal moves</Label>
          <Toggle id="shade" $c="#3fc53f" defaultChecked />
          <Label htmlFor="shade">Shade according to power</Label>
        </TraversalOptions>
      </DialogRow>
      <DialogRow $h={24} $pl={4}>
        <Note>Black lines are cuts, Red lines are moves between cuts</Note>
        <PushButton $w={141} $h={19} $primary>Ok</PushButton>
      </DialogRow>
      <Pointer viewBox="0 0 12 19">
        <path d="M1 1v14l3-3 2.500 6 2.500-1-2.500-5.500H11z" fill="#fff" stroke="#333" strokeWidth=".8" />
      </Pointer>
    </Dialog>
  );
}

function App() {
  return (
    <>
      <GlobalStyle />
      <Window>
        <TitleBar>
          <Logo />
          <Title>&lt;untitled&gt; * - LightBurn Beta 0.7.01</Title>
          <WindowButtons />
        </TitleBar>
        <MenuBar>
          <MenuItem><u>F</u>ile</MenuItem>
          {menus.map((m) => <MenuItem key={m}>{m}</MenuItem>)}
        </MenuBar>
        <MainTools />
        <NumericTools />
        <Body>
          <ToolRail />
          <WorkArea />
          <Dock>
            <CutsPanel />
            <PanelHeader spaced />
            <LaserControls />
            <Tabs>
              <Tab $on>Laser</Tab>
              <Tab>Library</Tab>
              <Tab>Shape Properties</Tab>
            </Tabs>
          </Dock>
        </Body>
        <Palette>
          <Grip />
          <Swatches>
            {colors.map((c, i) => <Swatch key={c} $c={c} $on={i === 0} aria-label={"Layer " + i}><span /></Swatch>)}
          </Swatches>
        </Palette>
        <StatusBar>
          <span>x: 200.00, y: 208.00 mm</span>
          <span>Min (137.0x, 192.0y) to Max (259.0x, 234.0y)</span>
          <svg width="9" height="9" fill="#bbb"><path d="M6 0h2v2H6zM3 3h2v2H3zM6 3h2v2H6zM0 6h2v2H0zM3 6h2v2H3zM6 6h2v2H6z" /></svg>
        </StatusBar>
        <Preview />
      </Window>
    </>
  );
}

export default App;
